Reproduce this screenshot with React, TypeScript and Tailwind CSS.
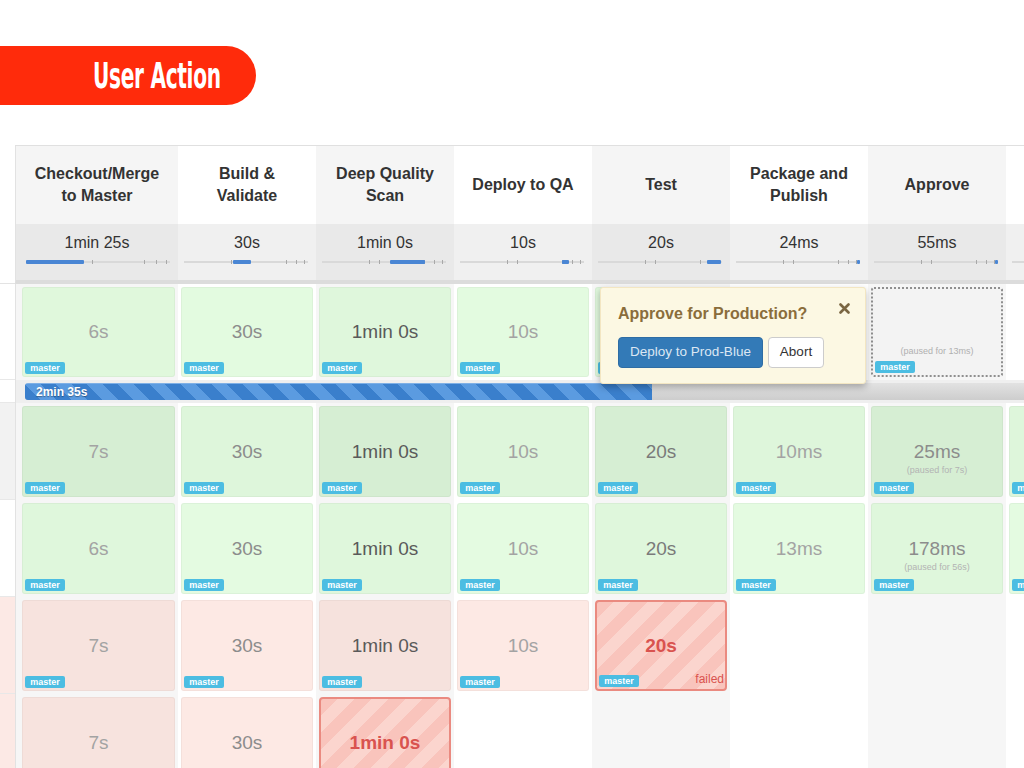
import React from 'react';

type CellData =
  | { k: 'ok'; t: string; c: string; bg: string; note?: string }
  | { k: 'fail'; t: string; failed?: boolean }
  | { k: 'pend'; note: string }
  | { k: 'none' };

type Col = {
  w: string;
  pad: string;
  head: string[];
  avg: string;
  hbg: string;
  tbg: string;
  bbg: string;
  bpad: string;
  seg: [number, number];
};

const COLS: Col[] = [
  { w: 'w-[163px] border-l border-[#e2e2e2]', pad: 'pl-[6px] pr-[3px]', head: ['Checkout/Merge', 'to Master'], avg: '1min 25s', hbg: 'bg-[#f5f5f5]', tbg: 'bg-[#e9e9e9]', bbg: 'bg-[#f6f6f6]', bpad: 'pl-[10px] pr-[8px]', seg: [0, 58] },
  { w: 'w-[138px]', pad: 'px-[3px]', head: ['Build &', 'Validate'], avg: '30s', hbg: 'bg-white', tbg: 'bg-[#f0f0f0]', bbg: 'bg-white', bpad: 'pl-[6px] pr-[8px]', seg: [49, 18] },
  { w: 'w-[138px]', pad: 'px-[3px]', head: ['Deep Quality', 'Scan'], avg: '1min 0s', hbg: 'bg-[#f5f5f5]', tbg: 'bg-[#e9e9e9]', bbg: 'bg-[#f6f6f6]', bpad: 'pl-[6px] pr-[8px]', seg: [68, 35] },
  { w: 'w-[138px]', pad: 'px-[3px]', head: ['Deploy to QA'], avg: '10s', hbg: 'bg-white', tbg: 'bg-[#f0f0f0]', bbg: 'bg-white', bpad: 'pl-[6px] pr-[8px]', seg: [102, 7] },
  { w: 'w-[138px]', pad: 'px-[3px]', head: ['Test'], avg: '20s', hbg: 'bg-[#f5f5f5]', tbg: 'bg-[#e9e9e9]', bbg: 'bg-[#f6f6f6]', bpad: 'pl-[6px] pr-[8px]', seg: [109, 14] },
  { w: 'w-[138px]', pad: 'px-[3px]', head: ['Package and', 'Publish'], avg: '24ms', hbg: 'bg-white', tbg: 'bg-[#f0f0f0]', bbg: 'bg-white', bpad: 'pl-[6px] pr-[8px]', seg: [121, 3] },
  { w: 'w-[138px]', pad: 'px-[3px]', head: ['Approve'], avg: '55ms', hbg: 'bg-[#f5f5f5]', tbg: 'bg-[#e9e9e9]', bbg: 'bg-[#f6f6f6]', bpad: 'pl-[6px] pr-[8px]', seg: [121, 3] },
  { w: 'w-[138px]', pad: 'px-[3px]', head: [], avg: '', hbg: 'bg-white', tbg: 'bg-[#f0f0f0]', bbg: 'bg-white', bpad: 'pl-[6px] pr-[8px]', seg: [120, 0] },
];

const L = 'text-[#a3a3a3]';
const M = 'text-[#8c8c8c]';
const D = 'text-[#5a5a5a]';
const MD = 'text-[#7a7a7a]';

const ROWS: { h: string; lbl: string; cells: CellData[] }[] = [
  {
    h: 'h-[96px]',
    lbl: 'bg-white',
    cells: [
      { k: 'ok', t: '6s', c: L, bg: 'bg-[#e0f8dc]' },
      { k: 'ok', t: '30s', c: M, bg: 'bg-[#e3fbe0]' },
      { k: 'ok', t: '1min 0s', c: D, bg: 'bg-[#dff7dc]' },
      { k: 'ok', t: '10s', c: L, bg: 'bg-[#e3fbe0]' },
      { k: 'ok', t: '20s', c: MD, bg: 'bg-[#dff7dc]' },
      { k: 'ok', t: '24ms', c: L, bg: 'bg-[#e3fbe0]' },
      { k: 'pend', note: '(paused for 13ms)' },
      { k: 'none' },
    ],
  },
  {
    h: 'h-[97px]',
    lbl: 'bg-[#f2f2f2]',
    cells: [
      { k: 'ok', t: '7s', c: L, bg: 'bg-[#d6eed3]' },
      { k: 'ok', t: '30s', c: M, bg: 'bg-[#def6db]' },
      { k: 'ok', t: '1min 0s', c: D, bg: 'bg-[#d6eed3]' },
      { k: 'ok', t: '10s', c: L, bg: 'bg-[#def6db]' },
      { k: 'ok', t: '20s', c: MD, bg: 'bg-[#d6eed3]' },
      { k: 'ok', t: '10ms', c: L, bg: 'bg-[#def6db]' },
      { k: 'ok', t: '25ms', c: M, bg: 'bg-[#d6eed3]', note: '(paused for 7s)' },
      { k: 'ok', t: '', c: M, bg: 'bg-[#def6db]' },
    ],
  },
  {
    h: 'h-[97px]',
    lbl: 'bg-white',
    cells: [
      { k: 'ok', t: '6s', c: L, bg: 'bg-[#dff7dc]' },
      { k: 'ok', t: '30s', c: M, bg: 'bg-[#e4fbe1]' },
      { k: 'ok', t: '1min 0s', c: D, bg: 'bg-[#dff7dc]' },
      { k: 'ok', t: '10s', c: L, bg: 'bg-[#e4fbe1]' },
      { k: 'ok', t: '20s', c: MD, bg: 'bg-[#dff7dc]' },
      { k: 'ok', t: '13ms', c: L, bg: 'bg-[#e4fbe1]' },
      { k: 'ok', t: '178ms', c: M, bg: 'bg-[#dff7dc]', note: '(paused for 56s)' },
      { k: 'ok', t: '', c: M, bg: 'bg-[#e4fbe1]' },
    ],
  },
  {
    h: 'h-[97px]',
    lbl: 'bg-[#fce9e5]',
    cells: [
      { k: 'ok', t: '7s', c: L, bg: 'bg-[#f7e3de]' },
      { k: 'ok', t: '30s', c: M, bg: 'bg-[#fde9e4]' },
      { k: 'ok', t: '1min 0s', c: D, bg: 'bg-[#f6e2dd]' },
      { k: 'ok', t: '10s', c: L, bg: 'bg-[#fde9e4]' },
      { k: 'fail', t: '20s', failed: true },
      { k: 'none' },
      { k: 'none' },
      { k: 'none' },
    ],
  },
  {
    h: 'h-[97px]',
    lbl: 'bg-[#fce9e5]',
    cells: [
      { k: 'ok', t: '7s', c: L, bg: 'bg-[#f7e3de]' },
      { k: 'ok', t: '30s', c: M, bg: 'bg-[#fde9e4]' },
      { k: 'fail', t: '1min 0s', failed: true },
      { k: 'none' },
      { k: 'none' },
      { k: 'none' },
      { k: 'none' },
      { k: 'none' },
    ],
  },
];

function Badge() {
  return (
    <span className="absolute left-[2px] bottom-[2px] h-[12px] w-[40px] rounded-[2px] bg-[#4cbde2] text-center text-[9px] font-bold leading-[12px] text-white">
      master
    </span>
  );
}

function CellBox({ d }: { d: CellData }) {
  if (d.k === 'none') return null;
  if (d.k === 'fail') {
    return (
      <div className="relative flex h-full items-center justify-center rounded-[4px] border-2 border-[#ea8a80] bg-[repeating-linear-gradient(135deg,#f9c4bc_0px,#f9c4bc_12px,#fbd5ce_12px,#fbd5ce_24px)]">
        <span className="text-[19px] font-bold leading-[22px] text-[#d9534f]">{d.t}</span>
        <Badge />
        <span className="absolute bottom-[3px] right-[1px] text-[12px] leading-[14px] text-[#d9534f]">failed</span>
      </div>
    );
  }
  if (d.k === 'pend') {
    return (
      <div className="relative flex h-full items-center justify-center rounded-[3px] border-2 border-dotted border-[#8f8f8f] bg-[#f3f3f3]">
        <span className="relative text-[19px] leading-[22px]">
          {'\u00a0'}
          <span className="absolute left-1/2 top-full mt-[3px] -translate-x-1/2 whitespace-nowrap text-[9px] leading-[11px] text-[#b0b0b0]">
            {d.note}
          </span>
        </span>
        <Badge />
      </div>
    );
  }
  return (
    <div className={`relative flex h-full items-center justify-center rounded-[3px] border border-black/[0.035] ${d.bg}`}>
      <span className={`relative text-[19px] leading-[22px] ${d.c}`}>
        {d.t || '\u00a0'}
        {d.note && (
          <span className="absolute left-1/2 top-full mt-[2px] -translate-x-1/2 whitespace-nowrap text-[9px] leading-[11px] text-[#b3b3b3]">
            {d.note}
          </span>
        )}
      </span>
      <Badge />
    </div>
  );
}

function Popup() {
  return (
    <div className="absolute left-[600px] top-[3px] z-10 h-[97px] w-[266px] rounded-[3px] border border-[#f3e6c2] bg-[#fcf8e3] pl-[17px] pt-[16px] shadow-[0_3px_7px_rgba(0,0,0,0.28)]">
      <div className="text-[16px] font-bold leading-[20px] text-[#8a6d3b]">Approve for Production?</div>
      <svg className="absolute right-[15px] top-[15px]" width="11" height="11" viewBox="0 0 11 11">
        <path d="M1.5 1.5 L9.5 9.5 M9.5 1.5 L1.5 9.5" stroke="#7a6642" strokeWidth="2.6" strokeLinecap="round" />
      </svg>
      <div className="mt-[13px] flex gap-[5px]">
        <div className="flex h-[31px] w-[145px] items-center justify-center rounded-[4px] border border-[#2e6da4] bg-[#337ab7] text-[13.5px] text-[#dbe7f3]">
          Deploy to Prod-Blue
        </div>
        <div className="flex h-[31px] w-[56px] items-center justify-center rounded-[4px] border border-[#cccccc] bg-white text-[13.5px] text-[#333]">
          Abort
        </div>
      </div>
    </div>
  );
}

const TICKS = [0.38, 0.46, 0.82, 0.9, 0.97];

export default function App() {
  return (
    <div className="h-[768px] w-[1024px] overflow-hidden bg-white font-['Liberation_Sans',Arial,sans-serif]">
      {/* Banner */}
      <div className="pt-[46px]">
        <div className="flex h-[59px] w-[256px] items-center rounded-r-[30px] bg-[#ff2b0b] pl-[93px]">
          <span className="origin-left scale-x-[0.64] whitespace-nowrap font-['Liberation_Sans_Narrow','DejaVu_Sans_Condensed',sans-serif] text-[35px] font-bold leading-[40px] tracking-[-0.5px] text-white">
            User Action
          </span>
        </div>
      </div>

      {/* Table */}
      <div className="mt-[40px]">
        {/* Header names */}
        <div className="flex">
          <div className="w-[15px] shrink-0" />
          <div className="flex border-t border-[#e0e0e0]">
            {COLS.map((c, i) => (
              <div
                key={i}
                className={`${c.w} ${c.hbg} flex h-[78px] shrink-0 flex-col items-center justify-center text-center text-[16px] font-bold leading-[22px] text-[#333]`}
              >
                {c.head.map((l, j) => (
                  <div key={j}>{l}</div>
                ))}
              </div>
            ))}
          </div>
        </div>

        {/* Average times */}
        <div className="flex">
          <div className="w-[15px] shrink-0 border-b border-[#e3e3e3]" />
          {COLS.map((c, i) => (
            <div key={i} className={`${c.w} ${c.tbg} h-[60px] shrink-0 border-b-[4px] border-b-[#dcdcdc] pt-[10px]`}>
              <div className="h-[18px] text-center text-[16px] leading-[18px] text-[#333]">{c.avg}</div>
              <div className={`${c.bpad} mt-[9px]`}>
                <div className="relative h-[2px] bg-[#d9d9d9]">
                  {TICKS.map((t, j) => (
                    <span key={j} className="absolute top-[-1px] h-[4px] w-[1px] bg-[#a8a8a8]" style={{ left: `${t * 100}%` }} />
                  ))}
                  <span
                    className="absolute top-[-1px] h-[4px] rounded-[1px] bg-[#4a86d4]"
                    style={{ left: c.seg[0], width: c.seg[1] }}
                  />
                </div>
              </div>
            </div>
          ))}
        </div>

        {/* Body */}
        {ROWS.map((r, ri) => (
          <React.Fragment key={ri}>
            <div className={`relative flex ${r.h}`}>
              <div className={`w-[15px] shrink-0 border-b border-[#e8e8e8] ${r.lbl}`} />
              {COLS.map((c, ci) => (
                <div key={ci} className={`${c.w} ${c.pad} ${c.bbg} shrink-0 py-[3px]`}>
                  <CellBox d={r.cells[ci]} />
                </div>
              ))}
              {ri === 0 && <Popup />}
            </div>
            {ri === 0 && (
              <div className="flex h-[23px]">
                <div className="w-[15px] shrink-0 border-b border-[#e8e8e8] bg-white" />
                <div className="flex-1 border-l border-[#e2e2e2] bg-[#efefef] py-[3px] pl-[9px]">
                  <div className="flex h-[17px] overflow-hidden rounded-l-[3px] bg-gradient-to-b from-[#e2e2e2] to-[#cdcdcd]">
                    <div className="flex h-full w-[627px] items-center border-t border-[#7fb0e6] bg-[repeating-linear-gradient(45deg,#3a7fcc_0px,#3a7fcc_11px,#5b9be0_11px,#5b9be0_22px)] pl-[11px] text-[12px] font-bold text-white [text-shadow:0_1px_1px_rgba(0,0,0,0.35)]">
                      2min 35s
                    </div>
                  </div>
                </div>
              </div>
            )}
          </React.Fragment>
        ))}
      </div>
    </div>
  );
}
